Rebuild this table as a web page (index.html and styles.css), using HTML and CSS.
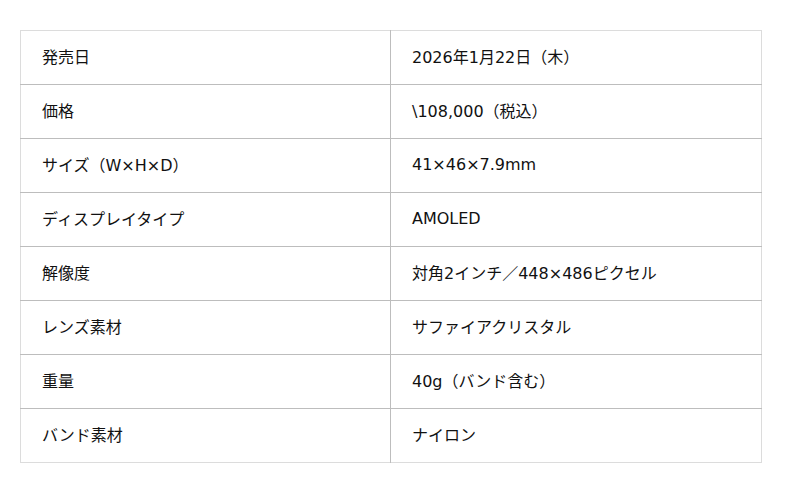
FILE: index.html
```html
<!DOCTYPE html>
<html lang="ja">
<head>
<meta charset="utf-8">
<link rel="stylesheet" href="styles.css">
</head>
<body>
<table class="spec">
<tbody>
<tr><th>発売日</th><td>2026年1月22日（木）</td></tr>
<tr><th>価格</th><td>\108,000（税込）</td></tr>
<tr><th>サイズ（W×H×D）</th><td>41×46×7.9mm</td></tr>
<tr><th>ディスプレイタイプ</th><td>AMOLED</td></tr>
<tr><th>解像度</th><td>対角2インチ／448×486ピクセル</td></tr>
<tr><th>レンズ素材</th><td>サファイアクリスタル</td></tr>
<tr><th>重量</th><td>40g（バンド含む）</td></tr>
<tr><th>バンド素材</th><td>ナイロン</td></tr>
</tbody>
</table>
</body>
</html>
```
FILE: styles.css
```css
html, body {
  margin: 0;
  background: #fff;
}
body {
  padding: 30px 0 0 20px;
  font-family: "DejaVu Sans", "Noto Sans CJK JP", sans-serif;
  font-size: 16px;
  color: #111;
}
.spec {
  width: 742px;
  border-collapse: collapse;
  table-layout: fixed;
  border: 1px solid #dcdcdc;
}
.spec th, .spec td {
  height: 54px;
  padding: 0 0 3px 21px;
  box-sizing: border-box;
  text-align: left;
  font-weight: normal;
  border-top: 1px solid #bdbdbd;
  vertical-align: middle;
}
.spec tr:first-child th, .spec tr:first-child td {
  border-top: 1px solid #dcdcdc;
}
.spec th {
  width: 370px;
  border-right: 1px solid #bdbdbd;
}
```
